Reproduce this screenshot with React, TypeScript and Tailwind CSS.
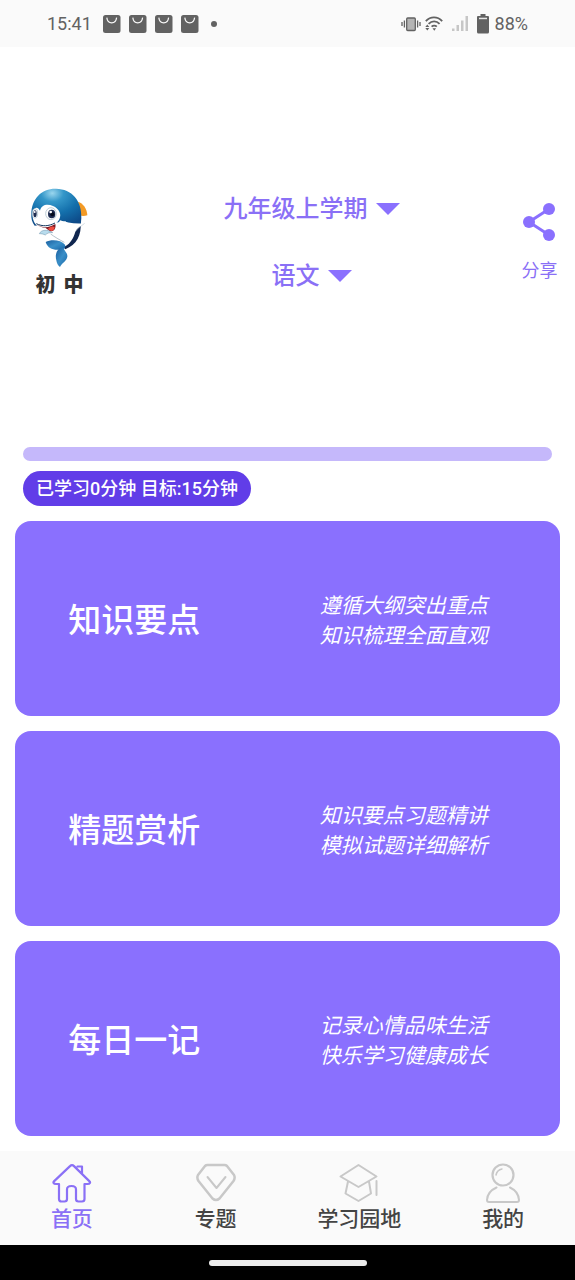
import React from "react";

const cards = [
  { title: "知识要点", lines: ["遵循大纲突出重点", "知识梳理全面直观"] },
  { title: "精题赏析", lines: ["知识要点习题精讲", "模拟试题详细解析"] },
  { title: "每日一记", lines: ["记录心情品味生活", "快乐学习健康成长"] },
];

function BagIcon() {
  return (
    <svg className="w-[18px] h-[18px]" viewBox="0 0 18 18" fill="none">
      <rect x="0" y="0" width="17.500" height="18" rx="2.500" fill="#626262" />
      <path d="M3.800 2.600c.4 3.400 2 5.200 4.900 5.200s4.500-1.800 4.900-5.200" stroke="#fafafa" strokeWidth="1.200" />
    </svg>
  );
}

function StatusBar() {
  return (
    <div className="h-[47px] bg-[#fafafa] flex items-center justify-between px-[47px] text-[#626262] text-lg">
      <div className="flex items-center">
        <span className="w-14">15:41</span>
        <div className="flex gap-2">
          <BagIcon />
          <BagIcon />
          <BagIcon />
          <BagIcon />
        </div>
        <span className="ml-3 w-[6px] h-[6px] rounded-full bg-[#626262]" />
      </div>
      <div className="flex items-center">
        <svg className="w-5 h-[18px]" viewBox="0 0 20 18" fill="none" stroke="#626262" strokeWidth="1.300">
          <rect x="5.700" y="3" width="8.600" height="12.500" rx="1" fill="#b4b4b4" />
          <path d="M3.400 5.500v7M1 7v4M16.600 5.500v7M19 7v4" />
        </svg>
        <svg className="ml-1 w-[18px] h-[18px]" viewBox="0 0 18 18" fill="none" stroke="#626262" strokeWidth="1.800">
          <path d="M.8 6.100C5.500 1.100 12.500 1.100 17.200 6.100M3.600 8.900c3.200-3.300 7.800-3.300 11 0M6.600 11.700c1.500-1.500 3.700-1.500 5.200 0" />
          <path d="M7.500 13.200h3.600l-1.800 2.500zM.3 12l2-2.500 2 2.500zM.3 13h4l-2 2.500z" fill="#626262" stroke="none" />
        </svg>
        <svg className="ml-2 w-[18px] h-[18px]" viewBox="0 0 18 18" fill="#c6c6c6">
          <path d="M1 13.500h2.500V16H1zM5.500 10H8v6H5.500zM10 5.500h2.500V16H10zM14.500 1H17v15h-2.500z" />
        </svg>
        <svg className="ml-2 w-3 h-5" viewBox="0 0 12 20" fill="#626262">
          <path d="M3.500 0h5v2H11q1 0 1 1v15q0 1.500-1.500 1.500h-9Q0 19.500 0 18V3q0-1 1-1h2.500z" />
          <path d="M2 3.700h8v1.500H2z" fill="#e6e6e6" />
        </svg>
        <span className="ml-[6px]">88%</span>
      </div>
    </div>
  );
}

function Dolphin() {
  return (
    <svg className="w-[60px] h-[82px]" viewBox="60 22 180 246">
      <defs>
        <radialGradient id="head" cx="0.42" cy="0.12" r="0.9">
          <stop offset="0" stopColor="#9ad6ee" />
          <stop offset="0.25" stopColor="#3497c9" />
          <stop offset="0.6" stopColor="#1470ac" />
          <stop offset="1" stopColor="#0d4a88" />
        </radialGradient>
        <linearGradient id="tail" x1="0" y1="0" x2="1" y2="1">
          <stop offset="0" stopColor="#1b5f9f" />
          <stop offset="0.5" stopColor="#3a8fc8" />
          <stop offset="1" stopColor="#1765a6" />
        </linearGradient>
      </defs>
      <path d="M204 66c15 5 27 20 28 41-8 3-17 3-22 0z" fill="#f39a25" />
      <path d="M212 128c3 38-12 68-46 81l-14-16c30-14 40-38 42-66z" fill="#10264f" />
      <path d="M64 104C64 56 96 26 138 27c48 1 78 36 76 88l-2 24c-14 4-30 0-46-14L74 138C66 128 63 116 64 104z" fill="url(#head)" />
      <path d="M69 98c3-17 15-18 21-5 4-18 22-22 39-14 18 8 27 24 19 40-7 15-26 22-41 24-19 2-32-6-37-22-3-8-2-15-1-23z" fill="#fff" />
      <path d="M150 122c18 6 42 12 74 9-12 9-23 15-28 25-6 20-14 34-30 44-14-14-34-18-56-14-10-7-17-14-22-24 18 4 48-8 62-40z" fill="#fff" />
      <path d="M196 156c6-10 17-16 28-25" fill="none" stroke="#a8bccb" strokeWidth="1.500" />
      <path d="M107 187c16-9 46-7 58 8 3 9-3 15-16 15-20 2-36-4-42-23z" fill="url(#tail)" />
      <path d="M149 206c-13 10-13 26-10 36 1 9 5 16 11 20 4-12 20-17 22-31 1-11-8-15-11-25z" fill="url(#tail)" />
      <path d="M88 162c6-13 26-13 40-3-10-1-16 1-22 7-6-3-12-4-18-4z" fill="#b9dced" stroke="#678ea9" strokeWidth="1.500" />
      <path d="M122 163c12 9 26 17 41 25" fill="none" stroke="#6c8594" strokeWidth="1.500" />
      <path d="M80 134c18 12 37 11 56-1 2 10-1 19-10 22-9-1-13-6-20-11-10 0-18-3-26-10z" fill="#7c1c26" />
      <path d="M114 147c7-7 15-8 20-5-1 8-4 11-9 12-4-1-8-3-11-7z" fill="#f04c40" />
      <path d="M79 132c18 9 37 8 56-2" fill="none" stroke="#14385f" strokeWidth="3" />
      <ellipse cx="123" cy="102" rx="16" ry="18" fill="#fff" stroke="#9fb6c4" strokeWidth="2" />
      <ellipse cx="125" cy="103" rx="11" ry="13" fill="#1e2c50" />
      <circle cx="127" cy="104" r="6" fill="#060b1c" />
      <circle cx="122" cy="97" r="4" fill="#fff" />
      <ellipse cx="75" cy="101" rx="8" ry="14" fill="#fff" stroke="#9fb6c4" strokeWidth="2" />
      <ellipse cx="75" cy="102" rx="5" ry="10" fill="#1e2c50" />
      <circle cx="74" cy="97" r="3" fill="#fff" />
    </svg>
  );
}

function Picker({ label, value }: { label: string; value: string }) {
  return (
    <label className="flex items-center gap-2">
      <select
        aria-label={label}
        className="appearance-none field-sizing-content bg-transparent text-2xl leading-8 font-medium text-[#8a70f6] outline-none"
      >
        <option>{value}</option>
      </select>
      <svg className="w-6 h-[13px]" viewBox="0 0 24 13" fill="#8a70fe">
        <path d="M0 0h24L12 12z" />
      </svg>
    </label>
  );
}

function Header() {
  return (
    <header className="h-[400px] pt-[140px] flex items-start">
      <div className="w-[119px] flex flex-col items-center gap-[2px]">
        <Dolphin />
        <span className="flex gap-2 text-xl leading-7 font-black text-[#333]">
          <span>初</span>
          <span>中</span>
        </span>
      </div>
      <div className="flex-1 pt-[6px] flex flex-col items-center gap-[35px]">
        <Picker label="年级" value="九年级上学期" />
        <Picker label="科目" value="语文" />
      </div>
      <button className="w-[71px] pt-4 flex flex-col items-center gap-[18px] text-lg leading-6 text-[#8a70f6]">
        <svg className="w-[34px] h-[38px]" viewBox="0 0 34 38" fill="#8a70fe">
          <path d="M26 6 6 19l20 13" fill="none" stroke="#8a70fe" strokeWidth="3" />
          <circle cx="26" cy="6" r="6" />
          <circle cx="6" cy="19" r="6" />
          <circle cx="26" cy="32" r="6" />
        </svg>
        分享
      </button>
    </header>
  );
}

function StudyCard({ title, lines }: { title: string; lines: string[] }) {
  return (
    <button className="h-[195px] pt-1 rounded-2xl bg-[#8a70fe] text-white grid grid-cols-[7fr_9fr] items-center justify-items-center">
      <span className="text-[33px] leading-10 font-medium">{title}</span>
      <span className="pr-[6px] text-[21px] leading-[30px] italic">
        {lines.map((line) => (
          <span key={line} className="block">
            {line}
          </span>
        ))}
      </span>
    </button>
  );
}

const tabs = [
  {
    label: "首页",
    icon: (
      <path
        d="M7 22H4c-2.600 0-3.200-1.600-1.800-2.900L18 4.100c1.300-1.300 2.700-1.300 4 0L37.300 19.100c1.400 1.300.8 2.900-1.800 2.900h-3v15q0 2.500-2.500 2.500h-3.500q-2.500 0-2.500-2.500V27.500Q24 24 19.500 24t-4.500 3.500V37q0 2.500-2.500 2.500H9.500q-2.500 0-2.500-2.500V22M25.500 4.500H30v7"
        strokeWidth="2.200"
      />
    ),
  },
  {
    label: "专题",
    icon: (
      <>
        <path d="M11.500 3h17q1.500 0 2.500 1l7 9q1.500 3-.5 6L23.500 36.500q-3.500 3-7 0L2.500 19q-2-3-.5-6l7-9q1-1 2.500-1z" strokeWidth="2.500" />
        <path d="m11.500 15 9 11 9-11" strokeWidth="2" />
      </>
    ),
  },
  {
    label: "学习园地",
    icon: (
      <path
        d="M19.500 3 1.500 14.500 19.500 25l18-10.500zM9 19.500 6.500 31.500 19.500 39 32 31.500 30 19.500M37.500 19v14"
        strokeWidth="2"
      />
    ),
  },
  {
    label: "我的",
    icon: (
      <>
        <circle cx="20" cy="13" r="10.500" strokeWidth="2.200" />
        <path d="M13 13q1-5 6-6" strokeWidth="1.500" />
        <path d="M13.500 25.500Q4.500 29.500 4 38q0 2 2 2h28q2 0 2-2-.5-8.500-9-12.500" strokeWidth="2" />
      </>
    ),
  },
];

function TabBar() {
  return (
    <nav className="h-[94px] bg-[#fafafa] grid grid-cols-4">
      {tabs.map((tab, index) => (
        <button
          key={tab.label}
          className={
            index === 0
              ? "pt-[11px] flex flex-col items-center text-[#8a70f6]"
              : "pt-[11px] flex flex-col items-center text-[#444]"
          }
        >
          <svg
            className="w-10 h-[42px]"
            viewBox="0 0 40 42"
            fill="none"
            stroke={index === 0 ? "#8a70f6" : "#c8c8c8"}
            strokeLinecap="round"
            strokeLinejoin="round"
          >
            {tab.icon}
          </svg>
          <span className="text-[21px] leading-[30px] font-medium">{tab.label}</span>
        </button>
      ))}
    </nav>
  );
}

function App() {
  return (
    <div className="min-h-screen flex flex-col bg-white font-[Roboto,'Noto_Sans_CJK_SC',sans-serif]">
      <StatusBar />
      <Header />
      <main className="flex-1 px-[15px] pb-[15px]">
        <div className="mx-2 h-[14px] rounded-full bg-[#c5b8fb]" />
        <p className="mx-2 mt-[10px] w-fit px-[13px] pt-px rounded-full bg-[#613de8] text-white text-lg leading-[34px] font-medium">
          已学习0分钟 目标:15分钟
        </p>
        <div className="mt-[15px] flex flex-col gap-[15px]">
          {cards.map((card) => (
            <StudyCard key={card.title} title={card.title} lines={card.lines} />
          ))}
        </div>
      </main>
      <TabBar />
      <div className="h-[35px] bg-black flex items-center justify-center">
        <span className="w-[158px] h-[6px] rounded-full bg-[#ececec]" />
      </div>
    </div>
  );
}

export default App;
